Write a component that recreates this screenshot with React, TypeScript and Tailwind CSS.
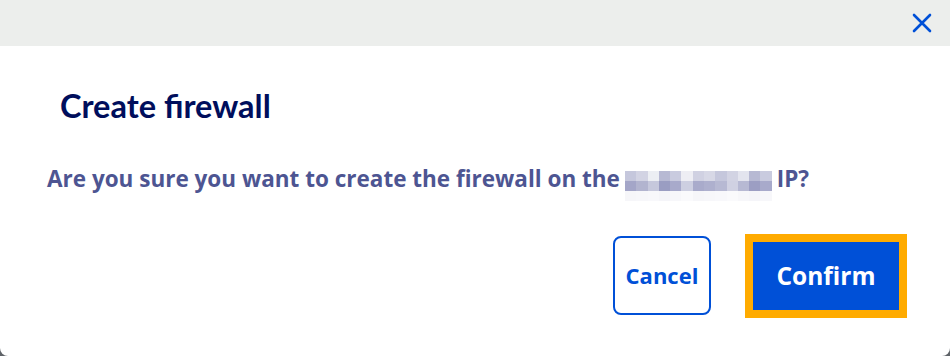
const BLUR_ROWS: string[][] = [
  ['#c5c7dc', '#d2d3e3', '#eceef3', '#b7b9d3', '#c9cbdf', '#eeeef4', '#d0d1e2', '#d7d8e6', '#c5c7dc', '#d2d3e3', '#e3e4ee', '#b7b9d3', '#c9cbdf'],
  ['#a4a6c8', '#b2b4cf', '#c6c8dc', '#9a9dc2', '#a8aacb', '#cdcfe1', '#a9abcb', '#aeb0ce', '#b7b9d3', '#d0d1e2', '#b7b9d3', '#9c9ec3', '#a8aacb'],
  ['#f6f6f9', '#f7f7fa', '#f8f8fb', '#f5f5f9', '#f7f7fa', '#fafafc', '#f6f6f9', '#f7f7fa', '#f8f8fb', '#fafafc', '#f7f7fa', '#f5f5f9', '#f7f7fa'],
];

function BlurredIp() {
  return (
    <span className="inline-flex flex-col align-middle mx-[5px] translate-y-[5px]">
      {BLUR_ROWS.map((row, i) => (
        <span key={i} className="flex">
          {row.map((c, j) => (
            <span key={j} className="block w-[11.3px] h-[10px]" style={{ backgroundColor: c }} />
          ))}
        </span>
      ))}
    </span>
  );
}

export default function App() {
  return (
    <div className="w-[950px] h-[356px] bg-[#5f6368]" style={{ fontFamily: "'Open Sans', 'Lato', sans-serif" }}>
      <div className="w-full h-full bg-white rounded-b-[8px] flex flex-col overflow-hidden">
        <div className="h-[46px] bg-[#eceeec] flex items-center justify-end pr-[17px]">
          <svg width="22" height="22" viewBox="0 0 22 22" fill="none" stroke="#0050d7" strokeWidth="2.6" strokeLinecap="round">
            <path d="M3 3L19 19M19 3L3 19" />
          </svg>
        </div>
        <h2
          className="pl-[60px] pt-[42px] text-[32.5px] leading-[36px] font-bold text-[#000e5c]"
          style={{ fontFamily: "'Lato', sans-serif" }}
        >
          Create firewall
        </h2>
        <p className="pl-[47px] pt-[41px] text-[22.5px] leading-[28px] font-bold text-[#4d5592] whitespace-nowrap">
          Are you sure you want to create the firewall on the<BlurredIp />IP?
        </p>
        <div className="flex justify-end items-center gap-[34px] pr-[43px] pt-[38px]">
          <button className="w-[98px] h-[79px] rounded-[8px] border-2 border-[#0050d7] text-[#0050d7] text-[22px] font-bold">
            Cancel
          </button>
          <button className="w-[162px] h-[84px] border-[8px] border-[#ffab00] bg-[#0050d7] text-white text-[24.5px] font-bold">
            Confirm
          </button>
        </div>
      </div>
    </div>
  );
}
